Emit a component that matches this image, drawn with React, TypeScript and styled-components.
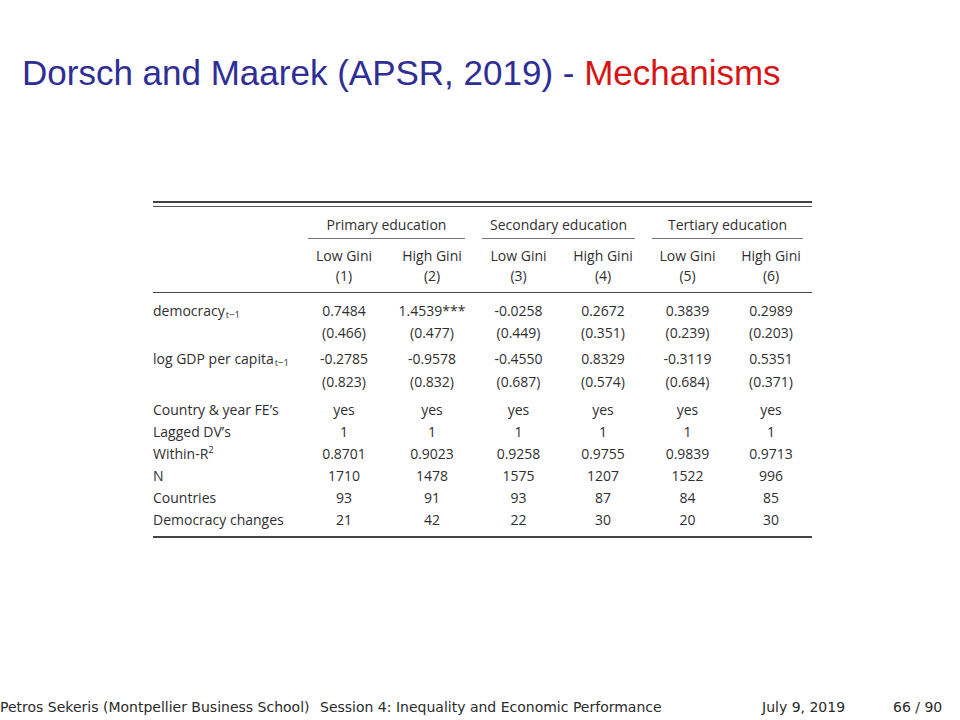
import React from "react";
import styled, { createGlobalStyle } from "styled-components";

const Global = createGlobalStyle`
  html, body { margin: 0; padding: 0; background: #fff; }
  #root { width: 960px; height: 720px; }
`;

const Slide = styled.div`
  width: 960px;
  height: 720px;
  display: flex;
  flex-direction: column;
  background: #fff;
  overflow: hidden;
`;

const Title = styled.h1`
  margin: 0;
  padding: 52px 0 0 22px;
  height: 42px;
  font-family: "Liberation Sans", Arial, sans-serif;
  font-weight: normal;
  font-size: 35px;
  line-height: 42px;
  color: #2e2e96;
  white-space: nowrap;
`;

const Accent = styled.span`
  color: #d81414;
`;

const TableArea = styled.div`
  margin: 107px 0 0 153px;
  width: 659px;
  font-family: "Open Sans", "Noto Sans", sans-serif;
  font-size: 14px;
  color: #2f2f2f;
`;

const DoubleRule = styled.div`
  height: 3px;
  border-top: 2px solid #444;
  border-bottom: 1px solid #555;
`;

const Table = styled.table`
  width: 659px;
  table-layout: fixed;
  border-collapse: collapse;
  border-bottom: 2px solid #444;
`;

const Cell = styled.td<{ $pt?: number; $pb?: number; $left?: boolean }>`
  padding: ${(p) => p.$pt ?? 0}px 0 ${(p) => p.$pb ?? 0}px;
  line-height: 22px;
  text-align: ${(p) => (p.$left ? "left" : "center")};
  white-space: nowrap;
  font-weight: normal;
  vertical-align: top;
`;

const HeadCell = styled.th<{ $pt?: number; $pb?: number; $rule?: boolean }>`
  padding: ${(p) => p.$pt ?? 0}px 0 ${(p) => p.$pb ?? 0}px;
  line-height: 20px;
  text-align: center;
  white-space: nowrap;
  font-weight: normal;
  border-bottom: ${(p) => (p.$rule ? "1px solid #444" : "none")};
  vertical-align: top;
`;

const GroupLabel = styled.div<{ $ml: number; $mr: number }>`
  margin: 0 ${(p) => p.$mr}px 0 ${(p) => p.$ml}px;
  padding-bottom: 3px;
  border-bottom: 1px solid #777;
`;

const Sub = styled.sub`
  font-size: 9.5px;
  vertical-align: -2px;
  line-height: 0;
  margin-left: 1px;
`;

const Sup = styled.sup`
  font-size: 9.5px;
  vertical-align: 6px;
  line-height: 0;
`;

const Footer = styled.footer`
  margin-top: auto;
  height: 26px;
  display: flex;
  align-items: center;
  font-family: "DejaVu Sans", Verdana, sans-serif;
  font-size: 14px;
  font-weight: normal;
  color: #2a2a2a;
  white-space: nowrap;
`;

const FootAuthor = styled.div`
  width: 320px;
`;

const FootTitle = styled.div`
  flex: 1;
`;

const FootDate = styled.div`
  width: 131px;
`;

const FootPage = styled.div`
  width: 67px;
`;

const cols = [147, 88, 88, 85, 84, 85, 82];

type Row = {
  label: React.ReactNode;
  vals: string[];
  pt?: number;
  pb?: number;
};

const rows: Row[] = [
  { label: <>democracy<Sub>t−1</Sub></>, vals: ["0.7484", "1.4539***", "-0.0258", "0.2672", "0.3839", "0.2989"], pt: 7 },
  { label: "", vals: ["(0.466)", "(0.477)", "(0.449)", "(0.351)", "(0.239)", "(0.203)"] },
  { label: <>log GDP per capita<Sub>t−1</Sub></>, vals: ["-0.2785", "-0.9578", "-0.4550", "0.8329", "-0.3119", "0.5351"], pt: 4 },
  { label: "", vals: ["(0.823)", "(0.832)", "(0.687)", "(0.574)", "(0.684)", "(0.371)"], pt: 1 },
  { label: "Country & year FE’s", vals: ["yes", "yes", "yes", "yes", "yes", "yes"], pt: 6 },
  { label: "Lagged DV’s", vals: ["1", "1", "1", "1", "1", "1"] },
  { label: <>Within-R<Sup>2</Sup></>, vals: ["0.8701", "0.9023", "0.9258", "0.9755", "0.9839", "0.9713"] },
  { label: "N", vals: ["1710", "1478", "1575", "1207", "1522", "996"] },
  { label: "Countries", vals: ["93", "91", "93", "87", "84", "85"] },
  { label: "Democracy changes", vals: ["21", "42", "22", "30", "20", "30"], pb: 5 },
];

export default function App() {
  return (
    <>
      <Global />
      <Slide>
        <Title>
          Dorsch and Maarek (APSR, 2019) - <Accent>Mechanisms</Accent>
        </Title>
        <TableArea>
          <DoubleRule />
          <Table>
            <colgroup>
              {cols.map((w, i) => (
                <col key={i} style={{ width: w }} />
              ))}
            </colgroup>
            <thead>
              <tr>
                <HeadCell $pt={8} />
                <HeadCell $pt={8} colSpan={2}>
                  <GroupLabel $ml={8} $mr={11}>Primary education</GroupLabel>
                </HeadCell>
                <HeadCell $pt={8} colSpan={2}>
                  <GroupLabel $ml={6} $mr={10}>Secondary education</GroupLabel>
                </HeadCell>
                <HeadCell $pt={8} colSpan={2}>
                  <GroupLabel $ml={7} $mr={9}>Tertiary education</GroupLabel>
                </HeadCell>
              </tr>
              <tr>
                <HeadCell $pt={7} />
                {["Low Gini", "High Gini", "Low Gini", "High Gini", "Low Gini", "High Gini"].map((t, i) => (
                  <HeadCell key={i} $pt={7}>{t}</HeadCell>
                ))}
              </tr>
              <tr>
                <HeadCell $pb={6} $rule />
                {["(1)", "(2)", "(3)", "(4)", "(5)", "(6)"].map((t, i) => (
                  <HeadCell key={i} $pb={6} $rule>{t}</HeadCell>
                ))}
              </tr>
            </thead>
            <tbody>
              {rows.map((r, ri) => (
                <tr key={ri}>
                  <Cell $left $pt={r.pt} $pb={r.pb}>{r.label}</Cell>
                  {r.vals.map((v, vi) => (
                    <Cell key={vi} $pt={r.pt} $pb={r.pb}>{v}</Cell>
                  ))}
                </tr>
              ))}
            </tbody>
          </Table>
        </TableArea>
        <Footer>
          <FootAuthor>Petros Sekeris  (Montpellier Business School)</FootAuthor>
          <FootTitle>Session 4: Inequality and Economic Performance</FootTitle>
          <FootDate>July 9, 2019</FootDate>
          <FootPage>66 / 90</FootPage>
        </Footer>
      </Slide>
    </>
  );
}
